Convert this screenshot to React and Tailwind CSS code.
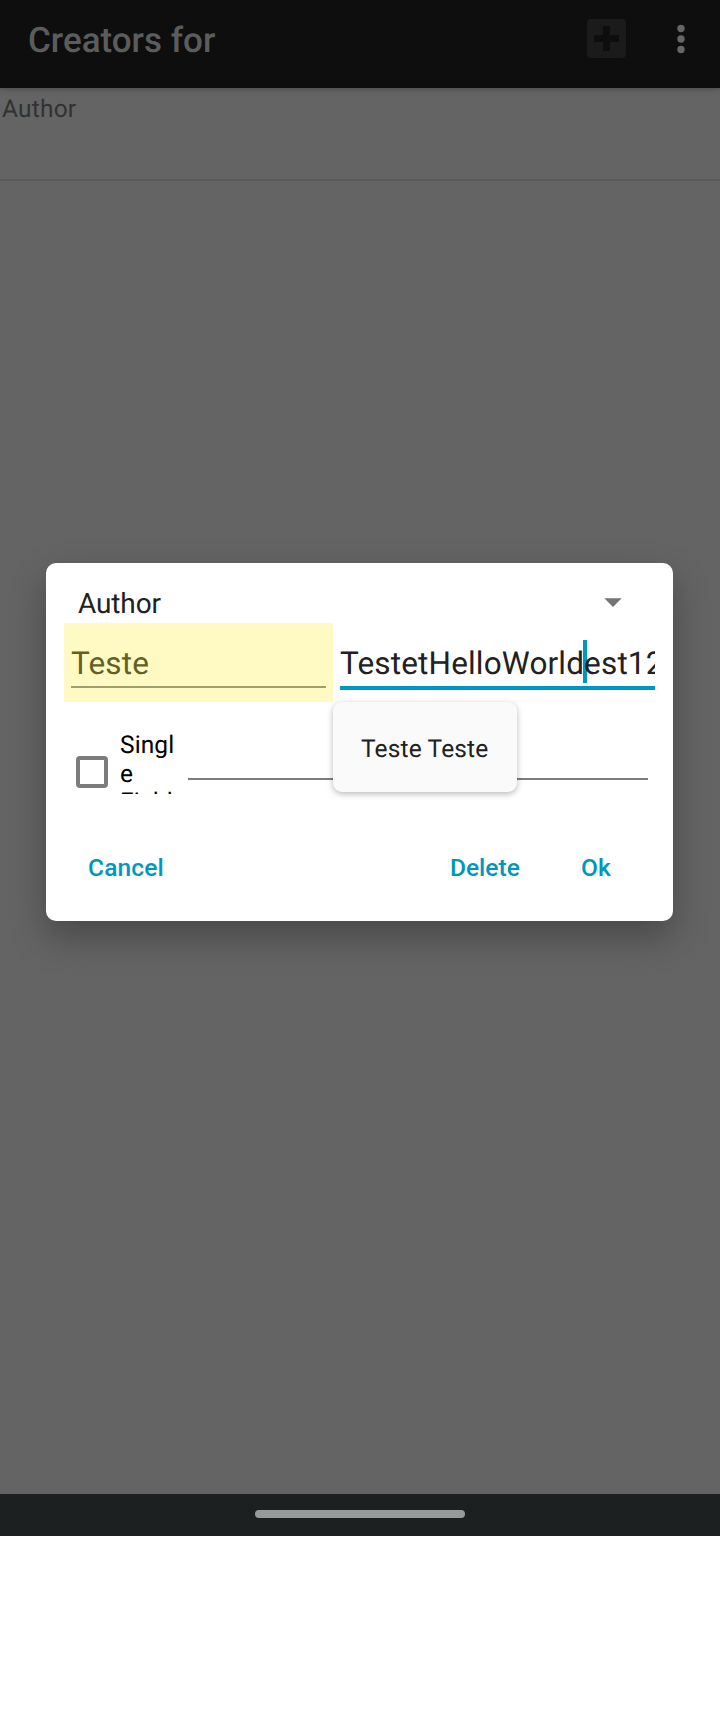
import React from "react";

function Header() {
  return (
    <header className="flex h-[88px] items-start justify-between bg-[#0e0e0e] pl-[28px] pr-[35px] shadow-[0_1px_5px_rgba(0,0,0,0.25)]">
      <h1 className="h-20 pt-px text-[35px] font-medium leading-[80px] text-[#5c5c5c]">Creators for</h1>
      <div className="flex pt-[19px]">
        <svg width="39" height="39" viewBox="0 0 39 39" className="mr-[51px]">
          <rect width="39" height="39" rx="4" fill="#1b1b1b" />
          <path d="M16 7h7v9h9v7h-9v9h-7v-9H7v-7h9z" fill="#0e0e0e" />
        </svg>
        <svg width="8" height="39" viewBox="0 0 8 39" className="overflow-visible">
          <circle cx="4" cy="9.5" r="3.7" fill="#666" />
          <circle cx="4" cy="20" r="3.7" fill="#666" />
          <circle cx="4" cy="30.5" r="3.7" fill="#666" />
        </svg>
      </div>
    </header>
  );
}

function Suggestion() {
  return (
    <div className="absolute left-[287px] top-[139px] flex h-[90px] w-[184px] items-center rounded-[9px] bg-[#fafafa] pl-[28px] pt-[4px] text-[24.5px] tracking-[0.15px] text-[#212121] shadow-[0_2px_6px_rgba(0,0,0,0.28)]">
      Teste Teste
    </div>
  );
}

function Dialog() {
  return (
    <section className="relative ml-[46px] h-[358px] w-[627px] rounded-[10px] bg-white shadow-[0_16px_36px_rgba(0,0,0,0.28)]">
      <div className="flex h-[60px] items-start justify-between pl-[32px] pr-[51px] pt-[20px]">
        <span className="text-[28px] leading-[41px] tracking-[-0.12px] text-[#212121]">Author</span>
        <svg width="18" height="9" viewBox="0 0 18 9" className="mt-[15px]">
          <path d="M0.3 0.3h17.4L9 9z" fill="#757575" />
        </svg>
      </div>
      <div className="flex h-[79px] pl-[18px]">
        <div className="w-[269px] bg-[#fff9c3] px-[7px] pt-[20px]">
          <div className="h-[45px] border-b-2 border-[#a39f6b] text-[31.5px] leading-[41px] tracking-[0.15px] text-[#645f26]">Teste</div>
        </div>
        <div className="ml-[7px] mt-[17px] h-[50px] w-[315px] overflow-hidden whitespace-nowrap border-b-[4px] border-[#0097bc] text-[31.5px] leading-[47px] tracking-[0.16px] text-[#212121]">
          TestetHelloWorld
          <span className="relative">
            <span className="absolute left-[-1px] top-[-5px] h-[43px] w-[4px] bg-[#0097bc]" />
            <span className="relative">est123</span>
          </span>
        </div>
      </div>
      <div className="flex h-[92px] pl-[30px] pt-[28px]">
        <div className="mt-[26px] h-[32px] w-[32px] rounded-[4px] border-4 border-[#7c7c7c]" />
        <div className="ml-[12px] h-[64px] w-[57px] overflow-hidden break-all text-[24.5px] leading-[29px] tracking-[0.1px] text-black">
          <div>Single</div>
          <div className="-mt-px">Field</div>
        </div>
        <div className="ml-[11px] mt-[48px] h-[2px] w-[460px] bg-[#7d7d7d]" />
      </div>
      <div className="flex h-[126px] items-start pl-[42px] pt-[58px] text-[24.5px] font-medium leading-[32px] text-[#0097bc]">
        <button className="w-[362px] text-left tracking-[0.15px]">Cancel</button>
        <button className="w-[131px] text-left">Delete</button>
        <button>Ok</button>
      </div>
      <Suggestion />
    </section>
  );
}

export default function App() {
  return (
    <div className="h-[1712px] w-[720px] overflow-hidden bg-white font-[Roboto,sans-serif] [text-rendering:geometricPrecision]">
      <main className="h-[1494px] bg-[#646464]">
        <Header />
        <div className="h-[93px] border-b-2 border-[#5a5a5a] pl-[2px] pt-[6px] text-[24.5px] leading-[29px] tracking-[0.2px] text-[#323232]">Author</div>
        <div className="pt-[382px]">
          <Dialog />
        </div>
      </main>
      <footer className="flex h-[42px] justify-center bg-[#1c2020] pt-4">
        <div className="h-2 w-[210px] rounded-full bg-[#989a99]" />
      </footer>
    </div>
  );
}
